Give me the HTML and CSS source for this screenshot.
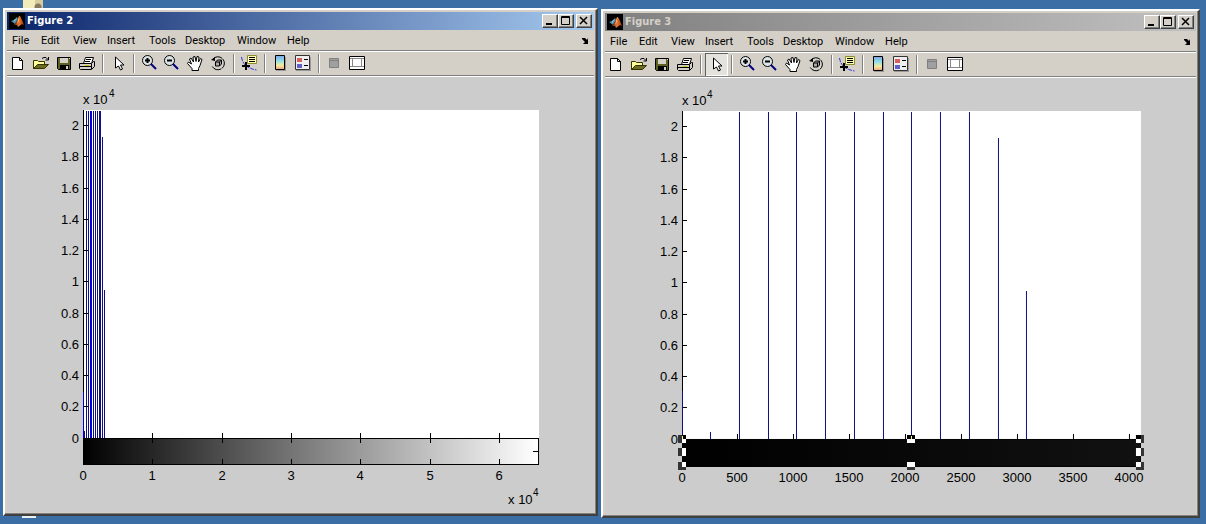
FILE: index.html
```html
<!DOCTYPE html>
<html lang="en">
<head>
<meta charset="utf-8">
<title>Figures</title>
<link rel="stylesheet" href="styles.css">
</head>
<body>
<svg class="defs" aria-hidden="true">
  <defs>
    <linearGradient id="gray"><stop offset="0" stop-color="#000"/><stop offset="1" stop-color="#fff"/></linearGradient>
    <linearGradient id="dark"><stop offset="0" stop-color="#000"/><stop offset="1" stop-color="#111"/></linearGradient>
    <linearGradient id="jet" x2="0" y2="1"><stop offset="0" stop-color="#79a5e8"/><stop offset=".4" stop-color="#94dfe4"/><stop offset=".7" stop-color="#f5eba0"/><stop offset="1" stop-color="#eea17f"/></linearGradient>
    <linearGradient id="flame"><stop offset="0" stop-color="#5a1c10"/><stop offset=".5" stop-color="#e87a34"/><stop offset="1" stop-color="#a5330f"/></linearGradient>
  </defs>
  <symbol id="logo" viewBox="0 0 16 16"><path fill="#000" d="M0 0h16v16H0z"/><path fill="#4c91ad" d="M2 8l3-1 3-3 1 2-3 5z"/><path fill="#9cc7d0" d="M5 7l3-2-3 4z"/><path fill="url(#flame)" d="M5 12l3-4 2-5 1 0 2 4 2 5-2-1-4 3-1-2z"/><path fill="#ffbb66" d="M10 4l0 4-2 3z"/></symbol>
  <symbol id="new" viewBox="0 0 23 23"><path fill="#fff" stroke="#000" d="M5.500 5.500h7l3 3v9h-10z"/><path fill="none" stroke="#000" d="M12.500 5.500v3h3"/></symbol>
  <symbol id="open" viewBox="0 0 23 23"><path fill="#ffff9c" stroke="#333300" d="M3.500 16.500v-8h4l1 1h6v3h-6z"/><path fill="#6c6c20" stroke="#333300" d="M3.500 16.500l4-4h11l-4 4z"/><path fill="none" stroke="#000" d="M12 6.500l2-1h2l2 2M18.500 5v3h-3"/></symbol>
  <symbol id="save" viewBox="0 0 23 23"><path fill="#606020" stroke="#000" d="M4.500 5.500h13v12h-12l-1-1z"/><path fill="#d4d0c8" d="M7 6h8v5H7z"/><path fill="#000" d="M7 13h9v5H7z"/><path fill="#d4d0c8" d="M13 14h2v3h-2zM16 6h1v1h-1z"/></symbol>
  <symbol id="print" viewBox="0 0 23 23"><path fill="#fff" stroke="#000" d="M7.500 11.500l2-6h8l-2 6z"/><path fill="#d4d0c8" stroke="#000" d="M3.500 11.500h12l2-2h1v5l-3 3h-11l-1-1z"/><path fill="none" stroke="#000" d="M10 7.500h5M9 9.500h5M4 14.500h12M15.500 12v5"/><path stroke="#cc0" d="M9 13.500h4"/></symbol>
  <symbol id="arrow" viewBox="0 0 23 23"><path fill="#fff" stroke="#000" d="M8.500 5v11l3-2 2 4 2-1-2-4h3.500z"/></symbol>
  <symbol id="zin" viewBox="0 0 23 23"><circle cx="9.500" cy="8.500" r="5" fill="#dce5e5" stroke="#000"/><path stroke="#000" stroke-width="2" d="M7 8.500h5M9.500 6v5"/><path stroke="#000080" stroke-width="2" d="M13 12l5 5"/></symbol>
  <symbol id="zout" viewBox="0 0 23 23"><circle cx="8.500" cy="8.500" r="5" fill="#dce5e5" stroke="#000"/><path stroke="#000" stroke-width="2" d="M6 8.500h5"/><path stroke="#000080" stroke-width="2" d="M12 12l5 5"/></symbol>
  <symbol id="hand" viewBox="0 0 23 23"><path fill="#fff" stroke="#000" d="M8 18.500v-2l-4.500-5 1-1.500 3 2-2-5 1.500-1 2.500 4-.5-5 2-.5 1 5 1-5 2 .5-.5 5 2-3.500 1.500 1-2 6-1.500 3v2z"/></symbol>
  <symbol id="rotate" viewBox="0 0 23 23"><path fill="none" stroke="#000" d="M6 7a6.500 6.500 0 1 1-1 7" stroke-dasharray="10 1"/><path d="M4 8l4-3v4z"/><path fill="#aaa" stroke="#000" d="M8.500 10l2-2h4v4l-2 2h-4zM8.500 10h4v4M12.500 10l2-2"/></symbol>
  <symbol id="cursor" viewBox="0 0 23 23"><path fill="none" stroke="#3434d0" d="M3.500 5c1 6 4 11 15 13" stroke-dasharray="4 1"/><path fill="#ffffb0" stroke="#8b8b30" d="M9.500 3.500h9v8h-9z"/><path stroke="#000" d="M11 5.500h6M11 7.500h6M11 9.500h6"/><path stroke="#000" stroke-width="2" d="M4 14h8M8 10v8"/></symbol>
  <symbol id="colorbar" viewBox="0 0 23 23"><path fill="#999" d="M7 5h10v14H7z"/><path fill="url(#jet)" stroke="#000" d="M6.500 3.500h9v14h-9z"/></symbol>
  <symbol id="legend" viewBox="0 0 23 23"><path fill="#999" d="M4 5h15v14H4z"/><path fill="#eee" stroke="#333" d="M3.500 3.500h14v14h-14z"/><path fill="#d75e5e" d="M5 6h5v4H5z"/><path fill="#6060c8" d="M5 12h5v4H5z"/><path stroke="#000" d="M12 7.500h4M12 13.500h4"/></symbol>
  <symbol id="hide" viewBox="0 0 23 23"><path fill="#a0a0a0" stroke="#808080" d="M6.500 6.500h9v9h-9zM7 8.500h8"/></symbol>
  <symbol id="show" viewBox="0 0 23 23"><path fill="#fff" stroke="#000" d="M3.500 4.500h15v13h-15z"/><path fill="none" stroke="#888" d="M4 6.500h14M4 14.500h14M6.500 6v9M15.500 6v9"/></symbol>
  <symbol id="min" viewBox="0 0 14 12"><path d="M3 8h6v2H3z"/></symbol>
  <symbol id="max" viewBox="0 0 14 12"><path fill="none" stroke="#000" d="M2.500 1.500h8v8h-8zM3 2.500h8"/></symbol>
  <symbol id="close" viewBox="0 0 14 12"><path fill="none" stroke="#000" stroke-width="1.500" d="M3 2l7 7M10 2l-7 7"/></symbol>
  <symbol id="dock" viewBox="0 0 8 8"><path d="M7 1v6H2l2-2-3-3V1h3l2 2z"/></symbol>
</svg>

<main class="desktop">
  <span class="folder" aria-hidden="true"></span>
  <span class="shortcut" aria-hidden="true"></span>

  <section class="window window-a">
    <header class="titlebar active">
      <svg class="logo"><use href="#logo"/></svg><h1 class="title">Figure 2</h1>
      <button class="control" aria-label="Minimize"><svg><use href="#min"/></svg></button>
      <button class="control" aria-label="Maximize"><svg><use href="#max"/></svg></button>
      <button class="control close" aria-label="Close"><svg><use href="#close"/></svg></button>
    </header>
    <nav class="menu">
      <button>File</button><button>Edit</button><button>View</button><button>Insert</button><button>Tools</button><button>Desktop</button><button>Window</button><button>Help</button>
      <button class="dock" aria-label="Dock figure"><svg><use href="#dock"/></svg></button>
    </nav>
    <div class="toolbar">
      <button class="tool" aria-label="New"><svg><use href="#new"/></svg></button>
      <button class="tool" aria-label="Open"><svg><use href="#open"/></svg></button>
      <button class="tool" aria-label="Save"><svg><use href="#save"/></svg></button>
      <button class="tool" aria-label="Print"><svg><use href="#print"/></svg></button>
      <span class="sep"></span>
      <button class="tool" aria-label="Edit plot"><svg><use href="#arrow"/></svg></button>
      <span class="sep"></span>
      <button class="tool" aria-label="Zoom in"><svg><use href="#zin"/></svg></button>
      <button class="tool" aria-label="Zoom out"><svg><use href="#zout"/></svg></button>
      <button class="tool" aria-label="Pan"><svg><use href="#hand"/></svg></button>
      <button class="tool" aria-label="Rotate 3D"><svg><use href="#rotate"/></svg></button>
      <span class="sep"></span>
      <button class="tool" aria-label="Data cursor"><svg><use href="#cursor"/></svg></button>
      <span class="sep"></span>
      <button class="tool" aria-label="Insert colorbar"><svg><use href="#colorbar"/></svg></button>
      <button class="tool" aria-label="Insert legend"><svg><use href="#legend"/></svg></button>
      <span class="sep"></span>
      <button class="tool" aria-label="Hide plot tools"><svg><use href="#hide"/></svg></button>
      <button class="tool" aria-label="Show plot tools"><svg><use href="#show"/></svg></button>
    </div>
    <svg class="plot" viewBox="7 77 587 435" role="img" aria-label="Histogram, 0 to 65535">
      <path fill="#fff" d="M83 110h456v328H83z"/>
      <path class="bar" d="M84.500 431v7M86.500 111v327M88.500 111v327M93.500 111v327M95.500 111v327M97.500 111v327M99.500 111v327M100.500 111v327M102.500 137v301M104.500 290v148"/>
      <path class="bar bright" d="M90.500 111v327M91.500 111v327"/>
      <path class="line" d="M83.500 110v328M83 125.500h5M83 156.500h5M83 188.500h5M83 219.500h5M83 250.500h5M83 281.500h5M83 313.500h5M83 344.500h5M83 375.500h5M83 406.500h5"/>
      <path class="bar bright" d="M83.500 392v46"/>
      <path fill="url(#gray)" stroke="#000" d="M83.500 438.500h455v26h-455z"/>
      <path class="line" d="M152.500 433v10M222.500 433v10M291.500 433v10M360.500 433v10M430.500 433v10M499.500 433v10M152.500 459v5M222.500 459v5M291.500 459v5M360.500 459v5M430.500 459v5M499.500 459v5M533 451.500h5"/>
      <g class="ylab"><text x="79" y="130">2</text><text x="79" y="161">1.8</text><text x="79" y="193">1.6</text><text x="79" y="224">1.4</text><text x="79" y="255">1.2</text><text x="79" y="286">1</text><text x="79" y="318">0.8</text><text x="79" y="349">0.6</text><text x="79" y="380">0.4</text><text x="79" y="411">0.2</text><text x="79" y="443">0</text></g>
      <g class="xlab"><text x="83" y="480">0</text><text x="152" y="480">1</text><text x="222" y="480">2</text><text x="291" y="480">3</text><text x="360" y="480">4</text><text x="430" y="480">5</text><text x="499" y="480">6</text></g>
      <text x="83" y="104">x 10</text><text class="sup" x="109" y="97">4</text>
      <text x="508" y="504">x 10</text><text class="sup" x="533" y="496">4</text>
    </svg>
  </section>

  <section class="window window-b">
    <header class="titlebar">
      <svg class="logo"><use href="#logo"/></svg><h1 class="title">Figure 3</h1>
      <button class="control" aria-label="Minimize"><svg><use href="#min"/></svg></button>
      <button class="control" aria-label="Maximize"><svg><use href="#max"/></svg></button>
      <button class="control close" aria-label="Close"><svg><use href="#close"/></svg></button>
    </header>
    <nav class="menu">
      <button>File</button><button>Edit</button><button>View</button><button>Insert</button><button>Tools</button><button>Desktop</button><button>Window</button><button>Help</button>
      <button class="dock" aria-label="Dock figure"><svg><use href="#dock"/></svg></button>
    </nav>
    <div class="toolbar">
      <button class="tool" aria-label="New"><svg><use href="#new"/></svg></button>
      <button class="tool" aria-label="Open"><svg><use href="#open"/></svg></button>
      <button class="tool" aria-label="Save"><svg><use href="#save"/></svg></button>
      <button class="tool" aria-label="Print"><svg><use href="#print"/></svg></button>
      <span class="sep"></span>
      <button class="tool pressed" aria-label="Edit plot" aria-pressed="true"><svg><use href="#arrow"/></svg></button>
      <span class="sep"></span>
      <button class="tool" aria-label="Zoom in"><svg><use href="#zin"/></svg></button>
      <button class="tool" aria-label="Zoom out"><svg><use href="#zout"/></svg></button>
      <button class="tool" aria-label="Pan"><svg><use href="#hand"/></svg></button>
      <button class="tool" aria-label="Rotate 3D"><svg><use href="#rotate"/></svg></button>
      <span class="sep"></span>
      <button class="tool" aria-label="Data cursor"><svg><use href="#cursor"/></svg></button>
      <span class="sep"></span>
      <button class="tool" aria-label="Insert colorbar"><svg><use href="#colorbar"/></svg></button>
      <button class="tool" aria-label="Insert legend"><svg><use href="#legend"/></svg></button>
      <span class="sep"></span>
      <button class="tool" aria-label="Hide plot tools"><svg><use href="#hide"/></svg></button>
      <button class="tool" aria-label="Show plot tools"><svg><use href="#show"/></svg></button>
    </div>
    <svg class="plot" viewBox="605 78 591 436" role="img" aria-label="Histogram, 0 to 4095">
      <path fill="#fff" d="M682 111h459v328H682z"/>
      <path class="bar" d="M710.500 432v7M739.500 112v327M768.500 112v327M796.500 112v327M825.500 112v327M854.500 112v327M883.500 112v327M911.500 112v327M940.500 112v327M969.500 112v327M998.500 138v301M1026.500 291v148"/>
      <path class="line" d="M682.500 111v328M682 126.500h5M682 157.500h5M682 189.500h5M682 220.500h5M682 251.500h5M682 282.500h5M682 314.500h5M682 345.500h5M682 376.500h5M682 407.500h5M737.500 434v5M793.500 434v5M849.500 434v5M905.500 434v5M961.500 434v5M1017.500 434v5M1073.500 434v5M1129.500 434v5"/>
      <path class="bar" d="M682.500 391v48"/>
      <path fill="url(#dark)" stroke="#000" d="M682.500 439.500h458v27h-458z"/>
      <g class="ylab"><text x="678" y="131">2</text><text x="678" y="162">1.8</text><text x="678" y="194">1.6</text><text x="678" y="225">1.4</text><text x="678" y="256">1.2</text><text x="678" y="287">1</text><text x="678" y="319">0.8</text><text x="678" y="350">0.6</text><text x="678" y="381">0.4</text><text x="678" y="412">0.2</text><text x="678" y="444">0</text></g>
      <path fill="#333" d="M678 435h8v8h-8zM678 448h4v8h-4zM678 462h8v8h-8zM1136 435h8v8h-8zM1141 448h3v8h-3zM1136 462h8v8h-8zM907 466h8v4h-8z"/>
      <path fill="#000" d="M682 435h4v4h-4zM907 435h8v4h-8zM1136 435h5v4h-5z"/>
      <path fill="#fff" d="M682 439h4v4h-4zM682 448h4v8h-4zM682 462h4v5h-4zM1136 439h5v4h-5zM1136 448h5v8h-5zM1136 462h5v5h-5zM907 439h8v4h-8zM907 462h8v5h-8z"/>
      <path stroke="#ffff80" d="M911.500 436v3M682.500 436v3"/>
      <g class="xlab"><text x="682" y="482">0</text><text x="737" y="482">500</text><text x="793" y="482">1000</text><text x="849" y="482">1500</text><text x="905" y="482">2000</text><text x="961" y="482">2500</text><text x="1017" y="482">3000</text><text x="1073" y="482">3500</text><text x="1129" y="482">4000</text></g>
      <text x="682" y="105">x 10</text><text class="sup" x="707" y="98">4</text>
    </svg>
  </section>
</main>
</body>
</html>
```
FILE: styles.css
```css
* { box-sizing: border-box; }
body { margin: 0; background: #3b6ea5; font-family: "DejaVu Sans Condensed", "DejaVu Sans", sans-serif; }
button { margin: 0; padding: 0; border: 0; background: none; color: #000; font: inherit; }
svg { display: block; }
.defs { position: absolute; width: 0; height: 0; }
.desktop { position: relative; display: flex; align-items: flex-start; gap: 3px; min-height: 100vh; padding: 8px 6px 6px 3px; }
.folder { position: absolute; top: 0; left: 23px; width: 20px; height: 8px; background: radial-gradient(circle at 15px 7px, #887860 0 3px, transparent 4px), linear-gradient(90deg, #f4ecb8 0 60%, #d8cc9a 60%); }
.shortcut { position: absolute; top: 514px; left: 22px; width: 14px; height: 4px; background: #e8f0f4; }

.window { position: relative; min-width: 0; padding: 2px; background: #d4d0c8; border: 2px solid; border-color: #fff #404040 #404040 #fff; box-shadow: inset -1px -1px #808080; }
.window-a { flex: 595 1 0; }
.window-b { flex: 599 1 0; margin-top: 1px; }

.titlebar { display: flex; align-items: center; height: 18px; padding: 0 2px; background: linear-gradient(90deg, #808080, #c0c0c0); color: #d4d0c8; }
.titlebar.active { background: linear-gradient(90deg, #0a246a, #a6caf0); color: #fff; }
.logo { width: 16px; height: 16px; }
.title { flex: 1; margin: 0 0 0 2px; font-size: 11px; line-height: 18px; font-weight: bold; }
.control { width: 16px; height: 14px; background: #d4d0c8; border: 1px solid; border-color: #fff #404040 #404040 #fff; box-shadow: inset -1px -1px #808080; }
.control svg { width: 14px; height: 12px; }
.control.close { margin-left: 2px; }

.menu { display: grid; grid-template-columns: 29px 32px 34px 42px 36px 52px 50px 30px 1fr; height: 22px; padding: 0 5px; border-bottom: 1px solid #fff; box-shadow: inset 0 -1px #808080; font-family: Roboto, sans-serif; font-size: 11px; line-height: 20px; }
.menu button { text-align: left; }
.menu .dock { justify-self: end; }
.dock svg { width: 8px; height: 8px; }

.toolbar { display: flex; height: 25px; border-bottom: 1px solid #fff; box-shadow: inset 0 -1px #808080; }
.tool { flex: none; width: 23px; height: 23px; }
.tool svg { width: 23px; height: 23px; }
.tool.pressed { background: #e4e2dd; box-shadow: inset 1px 1px #606060, inset -1px -1px #fff; }
.sep { flex: none; width: 2px; height: 19px; margin: 2px 3px; background: linear-gradient(90deg, #808080 50%, #fff 50%); }

.plot { width: 100%; height: auto; background: #ccc; font-family: "Liberation Sans", Arial, sans-serif; font-size: 13px; }
.bar { fill: none; stroke: #101080; }
.bar.bright { stroke: #0000d8; }
.line { fill: none; stroke: #000; }
.ylab { text-anchor: end; }
.xlab { text-anchor: middle; }
.sup { font-size: 10px; }
```
